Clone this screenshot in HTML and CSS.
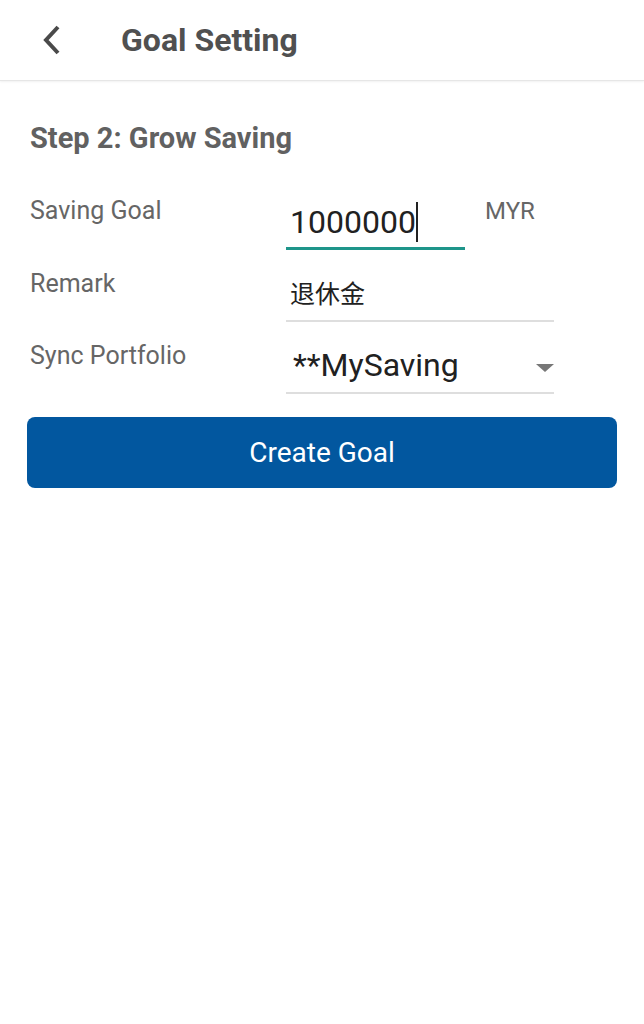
FILE: index.html
```html
<!DOCTYPE html>
<html>

<head>
    <link rel="stylesheet" href="styles.css">
</head>

<body>
    <div id="top-bar">
        <div class="back-btn">
            <svg width="20" height="30" viewBox="0 0 20 30">
                <polyline points="16,2 4,15 16,28" fill="none" stroke="#4a4a4a" stroke-width="4" />
            </svg>
        </div>
        <h1 class="page-title">Goal Setting</h1>
    </div>

    <div id="content-container">
        <h2 class="step-title">Step 2: Grow Saving</h2>

        <div class="form-row">
            <label class="field-label">Saving Goal</label>
            <div class="field field-active field-short">
                <span class="field-value">1000000</span><span class="caret"></span>
            </div>
            <span class="unit">MYR</span>
        </div>

        <div class="form-row">
            <label class="field-label">Remark</label>
            <div class="field field-wide">
                <span class="field-value cjk">退休金</span>
            </div>
        </div>

        <div class="form-row">
            <label class="field-label">Sync Portfolio</label>
            <div class="field field-wide field-select">
                <span class="field-value">**MySaving</span>
                <span class="select-arrow"></span>
            </div>
        </div>

        <button class="create-btn">Create Goal</button>
    </div>
</body>

</html>
```

FILE: styles.css
```css
body {
    font-family: Roboto, 'Noto Sans CJK SC', sans-serif;
    background: #fff;
    color: #333;
    margin: 0;
    width: 644px;
    height: 1024px;
}

#top-bar {
    height: 80px;
    display: flex;
    align-items: center;
    border-bottom: 1px solid #e6e6e6;
    box-shadow: 0 1px 2px rgba(0, 0, 0, 0.06);
}

.back-btn {
    width: 82px;
    padding-left: 42px;
    box-sizing: border-box;
    display: flex;
    align-items: center;
}

.page-title {
    margin: 0 0 0 39px;
    font-size: 32px;
    font-weight: bold;
    color: #505050;
    line-height: 80px;
}

#content-container {
    padding: 0 27px;
}

.step-title {
    margin: 41px 0 41px 3px;
    font-size: 29px;
    line-height: 33.6px;
    font-weight: bold;
    color: #616161;
}

.form-row {
    display: flex;
    align-items: flex-start;
    margin-bottom: 20px;
}

.field-label {
    width: 259px;
    padding-left: 3px;
    box-sizing: border-box;
    font-size: 25px;
    line-height: 28px;
    color: #666;
}

.field {
    margin-top: 5px;
    padding: 0 0 5px 4px;
    box-sizing: border-box;
    border-bottom: 2px solid #dedede;
    display: flex;
    align-items: center;
    height: 47px;
}

.field-short {
    width: 179px;
}

.field-wide {
    width: 268px;
}

.field-active {
    border-bottom: 3px solid #1e958a;
    height: 48px;
}

.field-value {
    font-size: 32px;
    line-height: 40px;
    color: #212121;
}

.field-value.cjk {
    font-size: 25px;
}

.caret {
    display: inline-block;
    width: 2px;
    height: 40px;
    background: #222;
}

.unit {
    margin-left: 20px;
    font-size: 24px;
    line-height: 28px;
    color: #666;
}

.field-select {
    justify-content: space-between;
}

.field-select .field-value {
    margin-left: 3px;
    margin-top: -3px;
}

.select-arrow {
    width: 0;
    height: 0;
    border-left: 9px solid transparent;
    border-right: 9px solid transparent;
    border-top: 8px solid #777;
    margin-top: 2px;
}

.create-btn {
    display: block;
    width: 100%;
    height: 71px;
    margin-top: 23px;
    border: none;
    border-radius: 8px;
    background: #02579f;
    color: #fff;
    font-family: Roboto, sans-serif;
    font-size: 28px;
    cursor: pointer;
}
```
